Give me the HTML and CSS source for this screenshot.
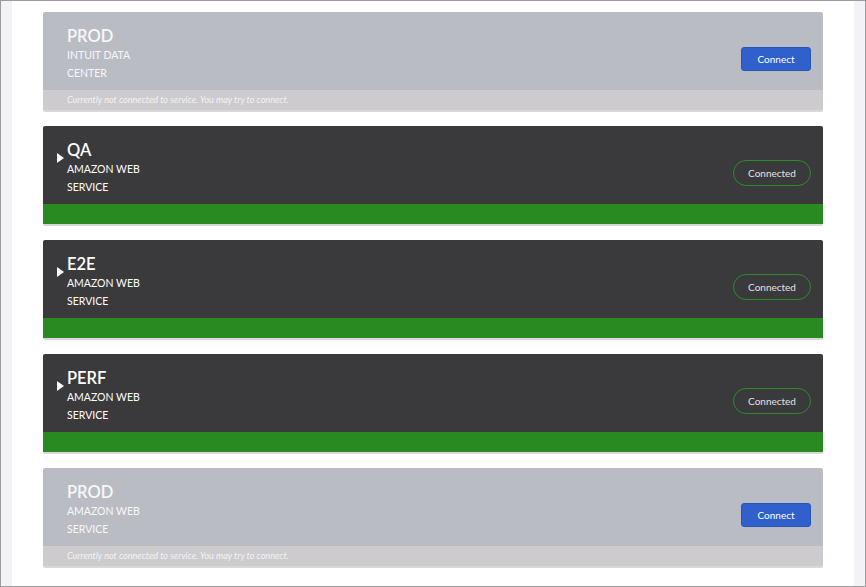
FILE: index.html
```html
<!DOCTYPE html>
<html>
<head>
<meta charset="utf-8">
<link rel="stylesheet" href="styles.css">
</head>
<body>
<div class="frame">
  <div class="side"></div>
  <main class="list">
    <section class="card off">
      <div class="head">
        <div class="toggle"></div>
        <div class="info">
          <div class="title">PROD</div>
          <div class="sub">INTUIT DATA<br>CENTER</div>
        </div>
        <button class="btn-connect">Connect</button>
      </div>
      <div class="foot">Currently not connected to service. You may try to connect.</div>
    </section>
    <section class="card on">
      <div class="head">
        <div class="toggle"><span class="tri"></span></div>
        <div class="info">
          <div class="title">QA</div>
          <div class="sub">AMAZON WEB<br>SERVICE</div>
        </div>
        <button class="btn-connected">Connected</button>
      </div>
      <div class="foot"></div>
    </section>
    <section class="card on">
      <div class="head">
        <div class="toggle"><span class="tri"></span></div>
        <div class="info">
          <div class="title">E2E</div>
          <div class="sub">AMAZON WEB<br>SERVICE</div>
        </div>
        <button class="btn-connected">Connected</button>
      </div>
      <div class="foot"></div>
    </section>
    <section class="card on">
      <div class="head">
        <div class="toggle"><span class="tri"></span></div>
        <div class="info">
          <div class="title">PERF</div>
          <div class="sub">AMAZON WEB<br>SERVICE</div>
        </div>
        <button class="btn-connected">Connected</button>
      </div>
      <div class="foot"></div>
    </section>
    <section class="card off">
      <div class="head">
        <div class="toggle"></div>
        <div class="info">
          <div class="title">PROD</div>
          <div class="sub">AMAZON WEB<br>SERVICE</div>
        </div>
        <button class="btn-connect">Connect</button>
      </div>
      <div class="foot">Currently not connected to service. You may try to connect.</div>
    </section>
  </main>
  <div class="side"></div>
</div>
</body>
</html>
```

FILE: styles.css
```css
* { box-sizing: border-box; }
html, body { margin: 0; padding: 0; background: #ffffff; }
body { font-family: Lato, "Open Sans", "Liberation Sans", sans-serif; }

.frame {
  width: 866px;
  height: 587px;
  border: 1px solid #9c9c9e;
  display: flex;
  overflow: hidden;
}
.side {
  width: 11px;
  flex: none;
  background: #f3f3f7;
}
.list {
  flex: 1;
  background: #ffffff;
  padding: 11px 31px 0 31px;
  display: flex;
  flex-direction: column;
  gap: 14px;
}

.card {
  height: 100px;
  flex: none;
  display: flex;
  flex-direction: column;
  border-radius: 2px;
  overflow: hidden;
  border-bottom: 2px solid #d8d8da;
}
.head {
  height: 78px;
  flex: none;
  display: flex;
  align-items: center;
  padding: 15px 12px 0 14px;
}
.toggle {
  width: 10px;
  flex: none;
  align-self: flex-start;
  margin-top: 12px;
}
.tri {
  display: block;
  width: 0;
  height: 0;
  border-top: 5px solid transparent;
  border-bottom: 5px solid transparent;
  border-left: 7px solid #ffffff;
}
.info {
  flex: 1;
  align-self: flex-start;
  margin-top: -1px;
  color: #ffffff;
}
.title {
  font-size: 16.5px;
  line-height: 20px;
  font-weight: 600;
}
.sub {
  font-size: 10.5px;
  line-height: 18px;
}
.foot {
  flex: 1;
  padding-left: 24px;
  font-size: 9.1px;
  line-height: 19px;
  font-style: italic;
  color: #f2f2f4;
}

.off .head { background: #babcc4; }
.off .foot { background: #cdcbce; }
.off .info { color: #f7f7f9; }
.on .head { background: #3a393c; }
.on .foot { background: #2a8a22; }

.btn-connect {
  width: 70px;
  height: 24px;
  border: 1px solid #2a55b8;
  border-radius: 3px;
  background: #3060cc;
  color: #ffffff;
  font-family: Lato, "Open Sans", "Liberation Sans", sans-serif;
  font-size: 10px;
  padding: 0;
}
.btn-connected {
  width: 78px;
  height: 26px;
  border: 1px solid #2f8a2b;
  border-radius: 13px;
  background: transparent;
  color: #e2e2e2;
  font-family: Lato, "Open Sans", "Liberation Sans", sans-serif;
  font-size: 10px;
  padding: 0;
}
```
